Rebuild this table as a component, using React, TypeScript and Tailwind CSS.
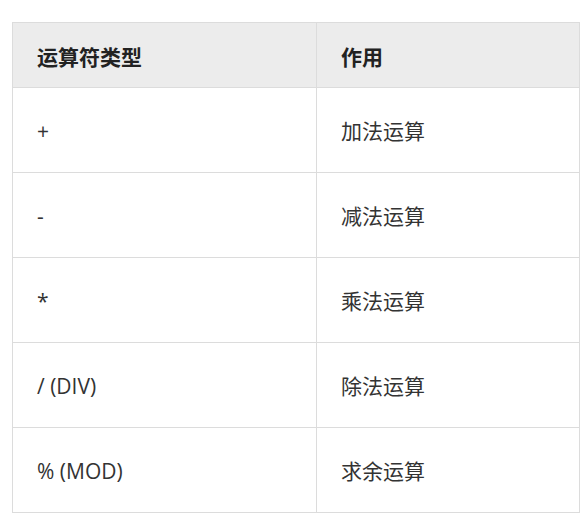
const rows: [string, string][] = [
  ['+', '加法运算'],
  ['-', '减法运算'],
  ['*', '乘法运算'],
  ['/ (DIV)', '除法运算'],
  ['% (MOD)', '求余运算'],
];

export default function App() {
  return (
    <div
      className="bg-white w-[585px] h-[530px] pt-[22px] pl-[12px]"
      style={{ fontFamily: '"Open Sans", "Noto Sans CJK SC", sans-serif' }}
    >
      <table className="border-collapse w-[567px] table-fixed text-[21px] text-[#333]">
        <colgroup>
          <col className="w-[304px]" />
          <col className="w-[263px]" />
        </colgroup>
        <thead>
          <tr className="bg-[#ececec]">
            <th className="h-[65px] border border-[#dcdcdc] px-[24px] pt-[5px] text-left font-bold text-[#222]">
              运算符类型
            </th>
            <th className="h-[65px] border border-[#dcdcdc] px-[24px] pt-[5px] text-left font-bold text-[#222]">
              作用
            </th>
          </tr>
        </thead>
        <tbody>
          {rows.map(([op, desc]) => (
            <tr key={op}>
              <td className="h-[85px] border border-[#dcdcdc] px-[24px] pt-[4px]">{op}</td>
              <td className="h-[85px] border border-[#dcdcdc] px-[24px] pt-[4px]">{desc}</td>
            </tr>
          ))}
        </tbody>
      </table>
    </div>
  );
}
